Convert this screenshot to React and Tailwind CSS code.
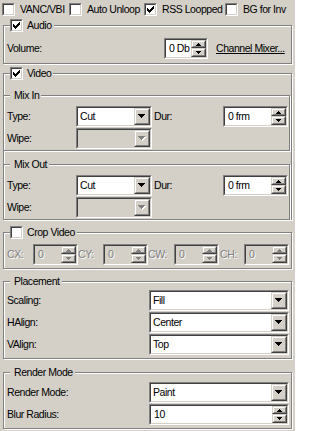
import React from "react";

const dis = "text-[#808080] [text-shadow:1px_1px_0_#fff]";

function Sunken({ className = "", inner = "bg-white", children }) {
  return (
    <div className={`flex border border-t-[#808080] border-l-[#808080] border-b-white border-r-white ${className}`}>
      <div className={`flex min-w-0 flex-1 border border-t-[#404040] border-l-[#404040] border-b-[#d4d0c8] border-r-[#d4d0c8] ${inner}`}>
        {children}
      </div>
    </div>
  );
}

function Raised({ className = "", children }) {
  return (
    <div className={`flex border border-t-[#d4d0c8] border-l-[#d4d0c8] border-b-[#404040] border-r-[#404040] ${className}`}>
      <div className="flex flex-1 items-center justify-center border border-t-white border-l-white border-b-[#808080] border-r-[#808080] bg-[#d4d0c8]">
        {children}
      </div>
    </div>
  );
}

function Check({ checked }) {
  return (
    <div className="flex h-[13px] w-[13px] shrink-0 border border-t-[#808080] border-l-[#808080] border-b-white border-r-white">
      <div className="flex flex-1 items-center justify-center border border-t-[#404040] border-l-[#404040] border-b-[#d4d0c8] border-r-[#d4d0c8] bg-white">
        {checked && (
          <svg width="7" height="7" viewBox="0 0 7 7" shapeRendering="crispEdges">
            <path
              d="M6 0h1v1h-1z M5 1h2v1h-2z M0 2h1v1h-1z M4 2h3v1h-3z M0 3h2v1h-2z M3 3h3v1h-3z M0 4h5v1h-5z M1 5h3v1h-3z M2 6h1v1h-1z"
              fill="#000"
            />
          </svg>
        )}
      </div>
    </div>
  );
}

function DownArrow({ disabled }) {
  const d = "M0 0h7v1h-7z M1 1h5v1h-5z M2 2h3v1h-3z M3 3h1v1h-1z";
  return (
    <svg width="8" height="5" viewBox="0 0 8 5" shapeRendering="crispEdges">
      {disabled && <path d={d} fill="#fff" transform="translate(1 1)" />}
      <path d={d} fill={disabled ? "#808080" : "#000"} />
    </svg>
  );
}

function SmallArrow({ up, disabled }) {
  const d = up
    ? "M2 0h1v1h-1z M1 1h3v1h-3z M0 2h5v1h-5z"
    : "M0 0h5v1h-5z M1 1h3v1h-3z M2 2h1v1h-1z";
  return (
    <svg width="5" height="3" viewBox="0 0 5 3" shapeRendering="crispEdges">
      <path d={d} fill={disabled ? "#808080" : "#000"} />
    </svg>
  );
}

function Combo({ value, className = "", disabled }) {
  return (
    <Sunken className={`h-[21px] ${className}`} inner={disabled ? "bg-[#d4d0c8]" : "bg-white"}>
      <div className="flex min-w-0 flex-1 items-center pl-[2px]">{value}</div>
      <Raised className="w-[16px]">
        <DownArrow disabled={disabled} />
      </Raised>
    </Sunken>
  );
}

function Spin({ value, className = "", disabled }) {
  return (
    <Sunken className={`h-[21px] ${className}`} inner={disabled ? "bg-[#d4d0c8]" : "bg-white"}>
      <div className={`flex min-w-0 flex-1 items-center pl-[3px] ${disabled ? dis : ""}`}>{value}</div>
      <div className="flex w-[15px] flex-col">
        <Raised className="h-[8px]">
          <SmallArrow up disabled={disabled} />
        </Raised>
        <Raised className="flex-1">
          <SmallArrow disabled={disabled} />
        </Raised>
      </div>
    </Sunken>
  );
}

function Group({ title, checked, className = "", children }) {
  return (
    <div className={`relative border border-[#808080] shadow-[inset_1px_1px_0_#fff,1px_1px_0_#fff] ${className}`}>
      <div className="absolute left-[6px] top-[-7px] flex h-[13px] items-center gap-[4px] bg-[#d4d0c8] pr-[2px]">
        {checked !== undefined ? <Check checked={checked} /> : <span className="w-0" />}
        <span className="leading-[13px]">{title}</span>
      </div>
      {children}
    </div>
  );
}

function MixGroup({ title, className = "" }) {
  return (
    <Group title={title} className={`-ml-[1px] mr-[1px] pt-[10px] pb-[1px] pl-[3px] ${className}`}>
      <div className="flex flex-col gap-[1px]">
        <div className="flex items-center">
          <span className="w-[69px]">Type:</span>
          <Combo value="Cut" className="w-[76px]" />
          <span className="w-[71px] pl-[2px]">Dur:</span>
          <Spin value="0 frm" className="w-[65px]" />
        </div>
        <div className="flex items-center">
          <span className="w-[69px]">Wipe:</span>
          <Combo value="" className="w-[76px]" disabled />
        </div>
      </div>
    </Group>
  );
}

function Row({ label, children }) {
  return (
    <div className="flex items-center">
      <span className="w-[142px]">{label}</span>
      {children}
    </div>
  );
}

export default function App() {
  const topChecks = [
    { label: "VANC/VBI", on: false, w: "w-[67px]" },
    { label: "Auto Unloop", on: false, w: "w-[75px]" },
    { label: "RSS Loopped", on: true, w: "w-[81px]" },
    { label: "BG for Inv", on: false, w: "w-[68px]" },
  ];
  const crop = [
    { label: "CX:", w: "w-[26px]" },
    { label: "CY:", w: "w-[25px]" },
    { label: "CW:", w: "w-[26px]" },
    { label: "CH:", w: "w-[25px] pl-[1px]" },
  ];

  return (
    <div className="h-[431px] w-[295px] overflow-hidden whitespace-nowrap bg-[#d4d0c8] pt-[3px] font-['Liberation_Sans',Arial,sans-serif] text-[10.5px] leading-[13px] tracking-[-0.45px] text-black">
      {/* top options */}
      <div className="flex h-[13px] pl-[2px]">
        {topChecks.map((c) => (
          <div key={c.label} className={`flex shrink-0 items-center gap-[5px] ${c.w}`}>
            <Check checked={c.on} />
            <span>{c.label}</span>
          </div>
        ))}
      </div>

      <div className="ml-[3px] w-[289px]">
        {/* Audio */}
        <Group title="Audio" checked className="mt-[9px] pt-[12px] pb-[4px] pl-[3px]">
          <div className="flex items-center">
            <span className="w-[157px]">Volume:</span>
            <Spin value="0 Db" className="w-[44px]" />
            <span className="ml-[8px] underline">Channel Mixer...</span>
          </div>
        </Group>

        {/* Video */}
        <Group title="Video" checked className="mt-[9px] pt-[21px]">
          <MixGroup title="Mix In" />
          <MixGroup title="Mix Out" className="mt-[13px] -mb-[1px]" />
        </Group>

        {/* Crop */}
        <Group title="Crop Video" checked={false} className="mt-[12px] pt-[11px] pb-[3px] pl-[3px]">
          <div className="flex items-center">
            {crop.map((c) => (
              <React.Fragment key={c.label}>
                <span className={`${c.w} ${dis}`}>{c.label}</span>
                <Spin value="0" className="w-[45px]" disabled />
              </React.Fragment>
            ))}
          </div>
        </Group>

        {/* Placement */}
        <Group title="Placement" className="mt-[12px] pt-[8px] pb-[3px] pl-[3px]">
          <div className="flex flex-col gap-[1px]">
            <Row label="Scaling:">
              <Combo value="Fill" className="w-[140px]" />
            </Row>
            <Row label="HAlign:">
              <Combo value="Center" className="w-[140px]" />
            </Row>
            <Row label="VAlign:">
              <Combo value="Top" className="w-[140px]" />
            </Row>
          </div>
        </Group>

        {/* Render Mode */}
        <Group title="Render Mode" className="mt-[13px] pt-[9px] pb-[3px] pl-[3px]">
          <div className="flex flex-col gap-[1px]">
            <Row label="Render Mode:">
              <Combo value="Paint" className="w-[140px]" />
            </Row>
            <Row label="Blur Radius:">
              <Spin value="10" className="w-[140px]" />
            </Row>
          </div>
        </Group>
      </div>
    </div>
  );
}
